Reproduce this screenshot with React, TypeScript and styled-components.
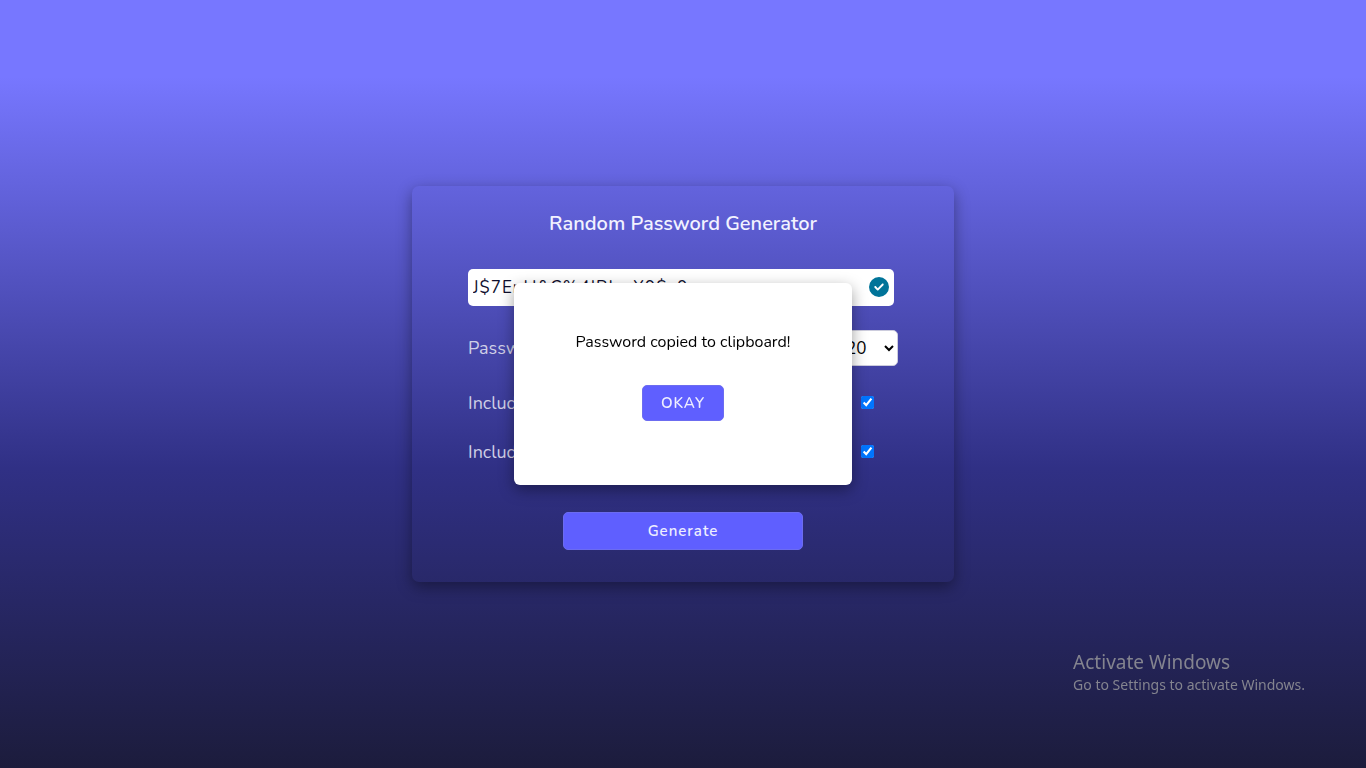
import React, { useState } from 'react';
import styled, { createGlobalStyle } from 'styled-components';

const fontStack = 'Nunito, "Noto Sans", sans-serif';
const raised = '0 5px 15px rgba(0, 0, 0, 0.38)';

const GlobalStyle = createGlobalStyle`
  *, *::before, *::after { box-sizing: border-box; }
  body {
    margin: 0;
    font-family: ${fontStack};
    color: #fff;
  }
`;

const Page = styled.main`
  min-height: 100vh;
  display: grid;
  place-items: center;
  padding: 16px;
  background: linear-gradient(to bottom, #7777ff 10%, #303085 61%, #1c1c3c 100%);
`;

const Card = styled.section`
  width: 100%;
  max-width: 542px;
  padding: 24px 56px 32px;
  border-radius: 7px;
  box-shadow: ${raised};
`;

const Title = styled.h1`
  margin: 0 0 32px;
  font-size: 20px;
  line-height: 27px;
  font-weight: 600;
  text-align: center;
  color: #f2f2ff;
`;

const PasswordBox = styled.div`
  display: flex;
  align-items: center;
  height: 37px;
  margin: 0 4px 24px 0;
  padding: 0 5px;
  border-radius: 5px;
  background: #fff;
`;

const PasswordInput = styled.input`
  flex: 1;
  min-width: 0;
  padding: 0;
  border: 0;
  outline: 0;
  background: transparent;
  color: #0e0e2c;
  font: 400 17px/25px ${fontStack};
  letter-spacing: 1px;
`;

const CopyButton = styled.button`
  display: flex;
  padding: 0 0 2px;
  border: 0;
  background: none;
  color: #007499;
`;

const Row = styled.div<{ $gap: number }>`
  display: flex;
  align-items: center;
  justify-content: space-between;
  height: 36px;
  margin-bottom: ${(p) => p.$gap}px;
`;

const Label = styled.label`
  font-size: 18px;
  line-height: 24px;
  color: #cfcfe6;
`;

const LengthSelect = styled.select`
  width: 60px;
  height: 36px;
  padding: 0 3px;
  border: 1px solid #ccccdd;
  border-radius: 5px;
  background: #fff;
  color: #000;
  font: 400 17px ${fontStack};
`;

const Check = styled.input`
  width: 13px;
  height: 13px;
  margin: 0 24px 2px 0;
`;

const Button = styled.button`
  border: 1px solid #6c6cf0;
  border-radius: 5px;
  background: #5f5fff;
  color: #eeeeff;
  font: 600 15px/20px ${fontStack};
  letter-spacing: 1px;
`;

const GenerateButton = styled(Button)`
  display: block;
  width: 240px;
  height: 38px;
  margin: 0 auto;
`;

const OkayButton = styled(Button)`
  width: 82px;
  height: 36px;
`;

const Modal = styled.div`
  position: fixed;
  top: 50%;
  left: 50%;
  transform: translate(-50%, -50%);
  display: flex;
  flex-direction: column;
  align-items: center;
  gap: 32px;
  width: 338px;
  padding: 48px 24px 64px;
  border-radius: 6px;
  background: #fff;
  color: #000;
  box-shadow: ${raised};
`;

const Message = styled.p`
  margin: 0;
  font-size: 16px;
  line-height: 22px;
`;

const Watermark = styled.aside`
  position: fixed;
  right: 61px;
  bottom: 73px;
  font-family: "Segoe UI", "Noto Sans", sans-serif;
  color: #84848f;
`;

const WatermarkTitle = styled.p`
  margin: 0;
  font-size: 19px;
  line-height: 26px;
`;

const WatermarkText = styled.p`
  margin: 0;
  font-size: 14px;
  line-height: 20px;
`;

const CopiedIcon = () => (
  <svg width="20" height="20" viewBox="0 0 512 512" aria-hidden="true">
    <path
      fill="currentColor"
      d="M256 512A256 256 0 1 0 256 0a256 256 0 1 0 0 512zM369 209L241 337c-9.4 9.4-24.6 9.4-33.9 0l-64-64c-9.4-9.4-9.4-24.6 0-33.9s24.6-9.4 33.9 0l47 47L335 175c9.4-9.4 24.6-9.4 33.9 0s9.4 24.6 0 33.9z"
    />
  </svg>
);

export default function App() {
  const [open, setOpen] = useState(true);
  return (
    <>
      <GlobalStyle />
      <Page>
        <Card>
          <Title>Random Password Generator</Title>
          <PasswordBox>
            <PasswordInput aria-label="Password" readOnly value="J$7EnH&C%4IBLrrX9$x9" />
            <CopyButton type="button" aria-label="Copy password">
              <CopiedIcon />
            </CopyButton>
          </PasswordBox>
          <Row $gap={19}>
            <Label htmlFor="length">Password length</Label>
            <LengthSelect id="length" defaultValue="20">
              <option>8</option>
              <option>12</option>
              <option>16</option>
              <option>20</option>
            </LengthSelect>
          </Row>
          <Row $gap={13}>
            <Label htmlFor="numbers">Include numbers</Label>
            <Check id="numbers" type="checkbox" defaultChecked />
          </Row>
          <Row $gap={42}>
            <Label htmlFor="symbols">Include symbols</Label>
            <Check id="symbols" type="checkbox" defaultChecked />
          </Row>
          <GenerateButton type="button">Generate</GenerateButton>
        </Card>
      </Page>
      {open && (
        <Modal role="dialog" aria-label="Password copied">
          <Message>Password copied to clipboard!</Message>
          <OkayButton type="button" onClick={() => setOpen(false)}>OKAY</OkayButton>
        </Modal>
      )}
      <Watermark>
        <WatermarkTitle>Activate Windows</WatermarkTitle>
        <WatermarkText>Go to Settings to activate Windows.</WatermarkText>
      </Watermark>
    </>
  );
}
